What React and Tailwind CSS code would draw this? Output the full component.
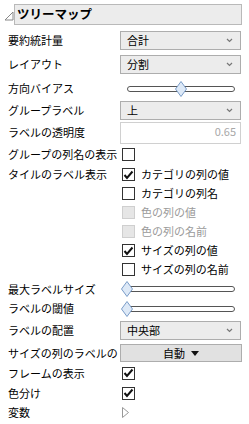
import React from "react";

const FONT = { fontFamily: '"Noto Sans CJK JP", "Noto Sans", sans-serif' };

function Dropdown({ value }) {
  return (
    <div className="flex items-center justify-between w-[121px] h-[19px] border border-[#adadad] bg-[#ececec] pl-[6px] pr-[7px]">
      <span className="text-[11px] text-black leading-none">{value}</span>
      <svg width="7" height="5" viewBox="0 0 7 5">
        <path d="M1 1 L3.5 3.5 L6 1" fill="none" stroke="#777" strokeWidth="1.2" />
      </svg>
    </div>
  );
}

function Slider({ pos }) {
  return (
    <div className="relative w-[108px] h-[16px] ml-[7px] flex items-center">
      <div className="w-full h-[6px] rounded-full border border-[#555] bg-white" />
      <svg
        className="absolute top-0"
        style={{ left: pos - 6 }}
        width="12"
        height="16"
        viewBox="0 0 12 16"
      >
        <path d="M6 0.5 L11.5 8 L6 15.5 L0.5 8 Z" fill="#dde9f7" stroke="#7a9cc8" strokeWidth="1" />
      </svg>
    </div>
  );
}

function Check({ checked, disabled }) {
  return (
    <div
      className={
        disabled
          ? "w-[13px] h-[13px] border border-[#cfcfcf] bg-[#e6e6e6] flex-shrink-0"
          : "w-[13px] h-[13px] border border-[#333] bg-white flex items-center justify-center flex-shrink-0"
      }
    >
      {checked && (
        <svg width="11" height="10" viewBox="0 0 11 10">
          <path d="M1.5 5 L4 8 L9.5 1.5" fill="none" stroke="#111" strokeWidth="2" />
        </svg>
      )}
    </div>
  );
}

function Row({ label, h, children }) {
  return (
    <div className="flex items-center" style={{ height: h }}>
      <div className="w-[112px] flex-shrink-0 whitespace-nowrap text-[11px] text-black leading-none">
        {label}
      </div>
      {children}
    </div>
  );
}

function CheckItem({ label, checked, disabled }) {
  return (
    <div className="flex items-center h-[19px] pl-[2px]">
      <Check checked={checked} disabled={disabled} />
      <span
        className={
          "ml-[6px] text-[11px] leading-none whitespace-nowrap " +
          (disabled ? "text-[#9a9a9a]" : "text-black")
        }
      >
        {label}
      </span>
    </div>
  );
}

export default function App() {
  return (
    <div className="w-[249px] h-[424px] bg-white overflow-hidden" style={FONT}>
      {/* ヘッダー */}
      <div className="flex items-end pt-[4px]">
        <svg className="ml-[4px] mb-[4px]" width="10" height="10" viewBox="0 0 10 10">
          <path d="M9 1 L9 9 L1 9 Z" fill="none" stroke="#888" strokeWidth="1" />
        </svg>
        <div className="w-[228px] h-[21px] border border-[#b9b9b9] bg-[#ececec] flex items-center pl-[2px]">
          <span className="text-[12.5px] font-bold text-black leading-none">ツリーマップ</span>
        </div>
      </div>

      <div className="pl-[8px] pt-[4px]">
        <Row label="要約統計量" h={23}>
          <Dropdown value="合計" />
        </Row>
        <Row label="レイアウト" h={25}>
          <Dropdown value="分割" />
        </Row>
        <Row label="方向バイアス" h={23}>
          <Slider pos={54} />
        </Row>
        <Row label="グループラベル" h={21}>
          <Dropdown value="上" />
        </Row>
        <Row label="ラベルの透明度" h={23}>
          <div className="w-[121px] h-[22px] border border-[#d0d0d0] bg-white flex items-start justify-end pr-[4px] pt-[3px]">
            <span className="text-[11px] text-[#a8a8a8] leading-none">0.65</span>
          </div>
        </Row>
        <Row label="グループの列名の表示" h={21}>
          <div className="pl-[2px]">
            <Check />
          </div>
        </Row>
        <div className="flex">
          <div className="w-[112px] h-[19px] flex-shrink-0 flex items-center text-[11px] text-black leading-none whitespace-nowrap">
            タイルのラベル表示
          </div>
          <div className="flex flex-col">
            <CheckItem label="カテゴリの列の値" checked />
            <CheckItem label="カテゴリの列名" />
            <CheckItem label="色の列の値" disabled />
            <CheckItem label="色の列の名前" disabled />
            <CheckItem label="サイズの列の値" checked />
            <CheckItem label="サイズの列の名前" />
          </div>
        </div>
        <Row label="最大ラベルサイズ" h={20}>
          <Slider pos={0} />
        </Row>
        <Row label="ラベルの閾値" h={19}>
          <Slider pos={0} />
        </Row>
        <Row label="ラベルの配置" h={25}>
          <Dropdown value="中央部" />
        </Row>
        <Row label="サイズの列のラベルの" h={20}>
          <div className="w-[122px] h-[18px] border border-[#adadad] bg-[#e1e1e1] flex items-center justify-center gap-[6px]">
            <span className="text-[11px] text-black leading-none">自動</span>
            <svg width="8" height="5" viewBox="0 0 8 5">
              <path d="M0 0 L8 0 L4 5 Z" fill="#111" />
            </svg>
          </div>
        </Row>
        <Row label="フレームの表示" h={20}>
          <div className="pl-[2px]">
            <Check checked />
          </div>
        </Row>
        <Row label="色分け" h={20}>
          <div className="pl-[2px]">
            <Check checked />
          </div>
        </Row>
        <Row label="変数" h={18}>
          <svg className="ml-[2px]" width="7" height="11" viewBox="0 0 7 11">
            <path d="M0.5 0.5 L6.5 5.5 L0.5 10.5 Z" fill="none" stroke="#999" strokeWidth="1" />
          </svg>
        </Row>
      </div>
    </div>
  );
}
